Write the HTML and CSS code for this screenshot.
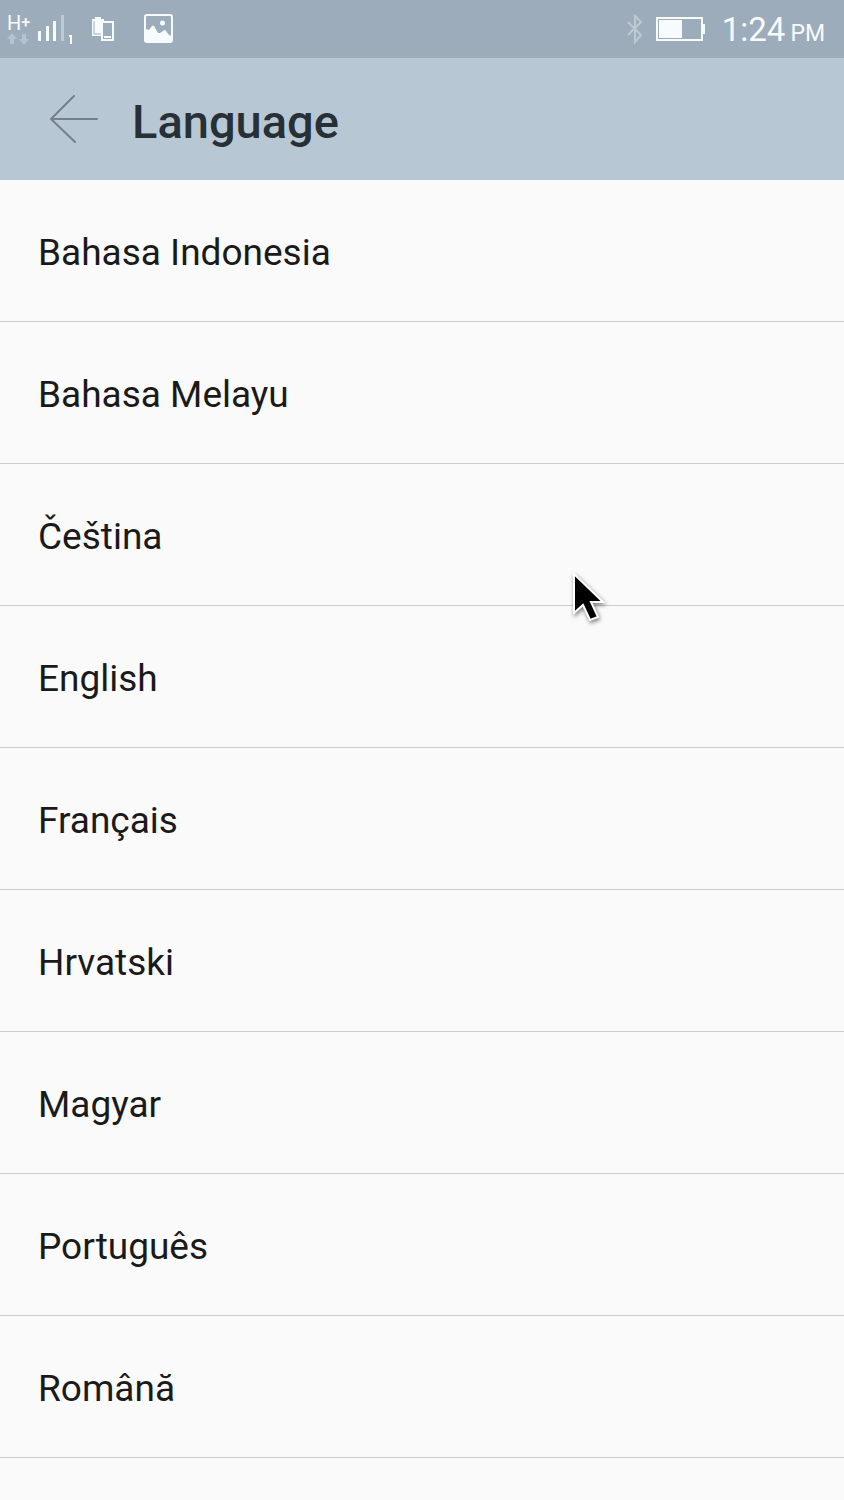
FILE: index.html
```html
<!DOCTYPE html>
<html lang="en">
<head>
<meta charset="utf-8">
<meta name="viewport" content="width=device-width, initial-scale=1">
<title>Language</title>
<link rel="stylesheet" href="styles.css">
</head>
<body>
<div class="status">
  <div class="status-group">
    <div class="network">
      <span class="network-type">H<span class="plus">+</span></span>
      <svg class="data-arrows" width="22" height="12" viewBox="0 0 22 12" aria-hidden="true"><path d="M5 0l5 6H7v5H3V6H0zM17 12l-5-6h3V1h4v5h3z"/></svg>
    </div>
    <svg class="signal" width="36" height="32" viewBox="0 0 36 32" aria-hidden="true"><path d="M0 18h3v10H0zM8 13h3v15H8zM15 8h3v20h-3zM31 22h3v9h-2v-7h-1z"/><path class="dim" d="M23 2h3v26h-3z"/></svg>
    <svg class="devices" width="22" height="26" viewBox="0 0 22 26" aria-hidden="true"><path class="solid" d="M0 3h3V1h6v2h3v17H0z"/><path class="hole" d="M2 5v13h7"/><path class="phone" d="M10 6h11v18H10z"/><path class="solid" d="M12 20h7v2h-7z"/></svg>
    <svg class="photo" width="30" height="30" viewBox="0 0 30 30" aria-hidden="true"><rect class="frame" x="1" y="1" width="27" height="27" rx="2"/><circle class="solid" cx="18.500" cy="9" r="2.500"/><path class="solid" d="M1 17l2-2 2 1 3-4q1-1 2 0l4 7h2l3-2q2-2 3 0l3 4 3 1v6H1z"/></svg>
  </div>
  <div class="status-group">
    <svg class="bluetooth" width="18" height="30" viewBox="0 0 18 30" aria-hidden="true"><path d="M2 8l13 13-6 7V2l6 6L2 21"/></svg>
    <svg class="battery" width="50" height="24" viewBox="0 0 50 24" aria-hidden="true"><rect class="case" x="1" y="1" width="45" height="22"/><path class="solid" d="M3 3h23v18H3zM46 7h3v10h-3z"/></svg>
    <div class="clock"><span>1:24</span><span class="meridiem">PM</span></div>
  </div>
</div>
<header class="bar">
  <button class="back" type="button" aria-label="Back">
    <svg width="50" height="48" viewBox="0 0 50 48" aria-hidden="true"><path d="M25 1L2 24l24 23M2 24h46"/></svg>
  </button>
  <h1 class="title">Language</h1>
</header>
<main class="list">
  <button class="row" type="button">Bahasa Indonesia</button>
  <button class="row" type="button">Bahasa Melayu</button>
  <button class="row" type="button" lang="cs">Čeština</button>
  <button class="row" type="button">English</button>
  <button class="row" type="button" lang="fr">Français</button>
  <button class="row" type="button" lang="hr">Hrvatski</button>
  <button class="row" type="button" lang="hu">Magyar</button>
  <button class="row" type="button" lang="pt">Português</button>
  <button class="row" type="button" lang="ro">Română</button>
</main>
<svg class="cursor" width="46" height="60" viewBox="0 0 46 60" aria-hidden="true"><path d="M6 4v39l9-8 7 15 8-3-7-15h12z"/></svg>
</body>
</html>
```
FILE: styles.css
```css
* { box-sizing: border-box; }

body {
  margin: 0;
  min-height: 100vh;
  position: relative;
  background: #fafafa;
  color: #1a1a1a;
  font-family: Roboto, "Noto Sans", sans-serif;
}

svg { display: block; flex: none; }

.status {
  display: flex;
  justify-content: space-between;
  height: 58px;
  padding: 0 19px 0 7px;
  background: #9dacba;
  color: #f8fbfd;
}
.status-group { display: flex; align-items: center; }

.network { width: 24px; }
.network-type { display: flex; align-items: center; font-size: 20px; line-height: 20px; }
.plus { font-size: 16px; font-weight: 500; }
.data-arrows { fill: #b5c3d0; }
.signal { margin-left: 7px; fill: #f8fbfd; }
.signal .dim { fill: #bdcad5; }
.devices { margin-left: 18px; }
.devices .hole { fill: none; stroke: #9dacba; }
.devices .phone { fill: #9dacba; stroke: #f8fbfd; stroke-width: 2; }
.solid { fill: #f8fbfd; }
.photo { margin-left: 30px; }
.frame, .case { fill: none; stroke: #f8fbfd; stroke-width: 2; }
.bluetooth { fill: none; stroke: #bdcad5; stroke-width: 2; }
.battery { margin-left: 12px; }
.clock {
  display: flex;
  align-items: baseline;
  gap: 5px;
  margin-left: 16px;
  padding-top: 5px;
  font-size: 33px;
  line-height: 40px;
  white-space: nowrap;
}
.meridiem { font-size: 23px; }

.bar {
  display: flex;
  align-items: center;
  height: 122px;
  padding-left: 49px;
  background: #b8c7d4;
}
.back { padding: 0; border: 0; background: none; cursor: pointer; }
.back path { fill: none; stroke: #74808a; stroke-width: 2; stroke-linecap: round; }
.title {
  margin: 0;
  padding: 6px 0 0 33px;
  color: #263036;
  font-size: 47px;
  line-height: 56px;
  font-weight: 500;
}

.list { display: flex; flex-direction: column; }
.row {
  height: 142px;
  padding: 4px 38px 0;
  border: 0;
  border-bottom: 1px solid #cccccc;
  background: none;
  color: inherit;
  font: inherit;
  font-size: 37px;
  line-height: 46px;
  text-align: left;
  cursor: pointer;
}

.cursor { position: absolute; left: 568px; top: 570px; filter: drop-shadow(1px 2px 2px #00000080); }
.cursor path { fill: #000; stroke: #fff; stroke-width: 2; }
```
